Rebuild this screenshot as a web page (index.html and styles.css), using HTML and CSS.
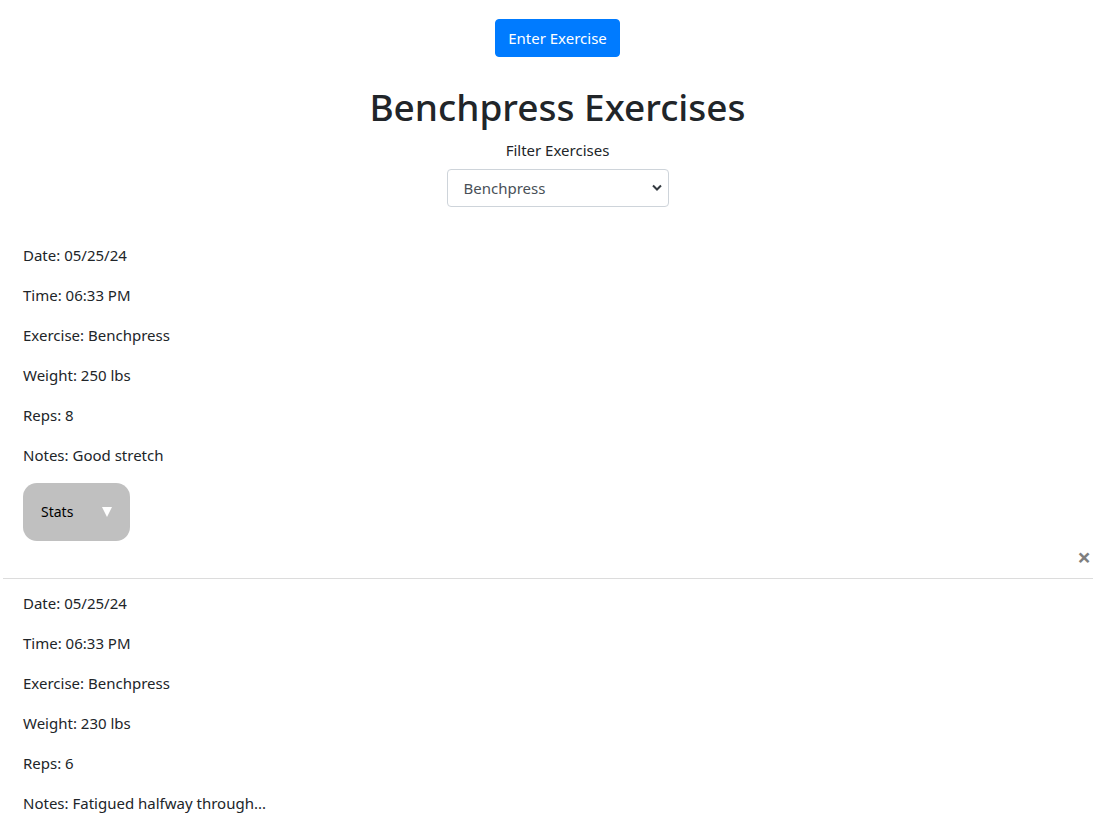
FILE: index.html
```html
<!DOCTYPE html>
<html>
<head>
<meta charset="utf-8">
<link rel="stylesheet" href="styles.css">
</head>
<body>
<div class="top">
  <button class="btn">Enter Exercise</button>
  <h1 class="title">Benchpress Exercises</h1>
  <label class="filter-label" for="f">Filter Exercises</label>
  <div class="select-wrap">
    <select id="f" class="select"><option>Benchpress</option></select>
    <svg class="chev" width="10" height="7" viewBox="0 0 10 7"><path d="M1 1.5 L5 5.5 L9 1.5" fill="none" stroke="#343a40" stroke-width="2"/></svg>
  </div>
</div>
<div class="entries">
  <div class="entry">
    <p>Date: 05/25/24</p>
    <p>Time: 06:33 PM</p>
    <p>Exercise: Benchpress</p>
    <p>Weight: 250 lbs</p>
    <p>Reps: 8</p>
    <p>Notes: Good stretch</p>
    <div class="stats"><span>Stats</span><span class="tri"></span></div>
  </div>
  <div class="close-row"><span class="close">×</span></div>
  <hr class="sep">
  <div class="entry">
    <p>Date: 05/25/24</p>
    <p>Time: 06:33 PM</p>
    <p>Exercise: Benchpress</p>
    <p>Weight: 230 lbs</p>
    <p>Reps: 6</p>
    <p class="last">Notes: Fatigued halfway through...</p>
  </div>
</div>
</body>
</html>
```
FILE: styles.css
```css
body {
  margin: 0;
  font-family: "Noto Sans", "Open Sans", sans-serif;
  font-size: 15px;
  line-height: 24px;
  color: #212529;
  background: #fff;
}
.top {
  display: flex;
  flex-direction: column;
  align-items: center;
  padding-top: 19px;
  padding-left: 22px;
}
.btn {
  font-family: inherit;
  font-size: 15px;
  line-height: 24px;
  padding: 6px 12px;
  height: 38px;
  border: 1px solid #007bff;
  background: #007bff;
  color: #fff;
  border-radius: 4px;
}
.title {
  margin: 26px 0 7px;
  font-size: 37px;
  line-height: 48px;
  font-weight: 500;
}
.filter-label {
  display: block;
  margin-bottom: 7px;
}
.select-wrap {
  position: relative;
  width: 222px;
  height: 38px;
}
.select {
  appearance: none;
  -webkit-appearance: none;
  width: 222px;
  height: 38px;
  box-sizing: border-box;
  border: 1px solid #ced4da;
  border-radius: 4px;
  background: #fff;
  padding: 0 28px 0 16px;
  font-family: inherit;
  font-size: 15px;
  color: #495057;
}
.chev {
  position: absolute;
  right: 7px;
  top: 15px;
  pointer-events: none;
}
.entries {
  margin-top: 36px;
}
.entry {
  padding: 0 23px;
}
.entry p {
  margin: 0 0 16px;
}
.entry p.last {
  margin-bottom: 0;
}
.stats {
  display: flex;
  align-items: center;
  width: 107px;
  height: 58px;
  box-sizing: border-box;
  padding-left: 18px;
  background: #c0c0c0;
  border-radius: 14px;
  font-size: 14px;
  color: #000;
}
.tri {
  margin-left: 29px;
  width: 0;
  height: 0;
  border-left: 5px solid transparent;
  border-right: 5px solid transparent;
  border-top: 10px solid #fff;
}
.close-row {
  display: flex;
  justify-content: flex-end;
  padding: 4px 2px 0 0;
}
.close {
  font-size: 24px;
  line-height: 24px;
  font-weight: 700;
  color: #000;
  opacity: 0.5;
}
.sep {
  margin: 9px 0 12px 3px;
  border: 0;
  border-top: 1px solid #dcdcdc;
}
```
